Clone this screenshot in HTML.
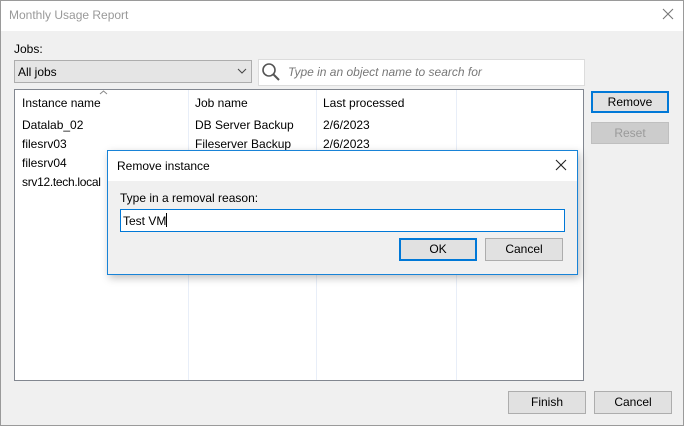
<!DOCTYPE html>
<html><head><style>
*{box-sizing:border-box;margin:0;padding:0}
body{width:684px;height:426px;overflow:hidden;font-family:"Liberation Sans",sans-serif;font-size:12px;color:#000;background:#f0f0f0;position:relative}
.a{position:absolute}
.btn{position:absolute;background:#e1e1e1;border:1px solid #adadad;text-align:center;line-height:20px}
.blue{border:2px solid #0078d7;line-height:18px}
.t{position:absolute;white-space:nowrap}
</style></head><body>
<div class="a" style="left:0;top:0;width:684px;height:426px;border:1px solid #9a9a9a"></div>
<div class="a" style="left:1px;top:1px;width:682px;height:30px;background:#fff"></div>
<div class="t" style="left:9px;top:8px;color:#999;font-size:12px">Monthly Usage Report</div>
<svg class="a" style="left:662px;top:8px" width="12" height="12"><path d="M1 1L11 11M11 1L1 11" stroke="#777" stroke-width="1.1"/></svg>
<div class="t" style="left:14px;top:42px">Jobs:</div>
<div class="a" style="left:14px;top:60px;width:238px;height:23px;background:#e5e5e5;border:1px solid #adadad"></div>
<div class="t" style="left:18px;top:65px">All jobs</div>
<svg class="a" style="left:237px;top:68px" width="10" height="7"><path d="M1 1L5 5L9 1" stroke="#444" fill="none"/></svg>
<div class="a" style="left:258px;top:59px;width:327px;height:27px;background:#fff;border:1px solid #dcdcdc"></div>
<svg class="a" style="left:261px;top:62px" width="20" height="20"><circle cx="8" cy="8" r="6" stroke="#555" stroke-width="1.6" fill="none"/><path d="M12.5 12.5L18 18" stroke="#555" stroke-width="2"/></svg>
<div class="t" style="left:288px;top:65px;color:#777;font-style:italic">Type in an object name to search for</div>
<div class="a" style="left:14px;top:89px;width:570px;height:292px;background:#fff;border:1px solid #828790"></div>
<div class="a" style="left:188px;top:90px;width:1px;height:290px;background:#e8eef8"></div>
<div class="a" style="left:316px;top:90px;width:1px;height:290px;background:#e8eef8"></div>
<div class="a" style="left:456px;top:90px;width:1px;height:290px;background:#e8eef8"></div>
<svg class="a" style="left:99px;top:90px" width="9" height="5"><path d="M1 4L4.5 1L8 4" stroke="#888" fill="none"/></svg>
<div class="t" style="left:22px;top:96px">Instance name</div>
<div class="t" style="left:195px;top:96px">Job name</div>
<div class="t" style="left:323px;top:96px">Last processed</div>
<div class="t" style="left:22px;top:118px">Datalab_02</div>
<div class="t" style="left:195px;top:118px">DB Server Backup</div>
<div class="t" style="left:323px;top:118px">2/6/2023</div>
<div class="t" style="left:22px;top:137px">filesrv03</div>
<div class="t" style="left:195px;top:137px">Fileserver Backup</div>
<div class="t" style="left:323px;top:137px">2/6/2023</div>
<div class="t" style="left:22px;top:156px">filesrv04</div>
<div class="t" style="left:22px;top:175px;letter-spacing:-0.3px">srv12.tech.local</div>
<div class="btn blue" style="left:591px;top:91px;width:78px;height:22px">Remove</div>
<div class="btn" style="left:591px;top:122px;width:78px;height:22px;background:#ccc;border-color:#bfbfbf;color:#9a9a9a">Reset</div>
<div class="btn" style="left:508px;top:391px;width:78px;height:23px">Finish</div>
<div class="btn" style="left:594px;top:391px;width:78px;height:23px">Cancel</div>
<div class="a" style="left:107px;top:150px;width:471px;height:125px;background:#f0f0f0;border:1px solid #1883d7;box-shadow:2px 3px 8px rgba(0,0,0,.25)"></div>
<div class="a" style="left:108px;top:151px;width:469px;height:30px;background:#fff"></div>
<div class="t" style="left:117px;top:159px">Remove instance</div>
<svg class="a" style="left:555px;top:159px" width="12" height="12"><path d="M1 1L11 11M11 1L1 11" stroke="#222" stroke-width="1.1"/></svg>
<div class="t" style="left:120px;top:191px">Type in a removal reason:</div>
<div class="a" style="left:120px;top:209px;width:445px;height:23px;background:#fff;border:1px solid #0078d7"></div>
<div class="t" style="left:123px;top:213px">Test VM<span style="display:inline-block;width:1px;height:14px;background:#000;vertical-align:-2px"></span></div>
<div class="btn blue" style="left:399px;top:238px;width:78px;height:23px;line-height:19px">OK</div>
<div class="btn" style="left:485px;top:238px;width:78px;height:23px">Cancel</div>
</body></html>
